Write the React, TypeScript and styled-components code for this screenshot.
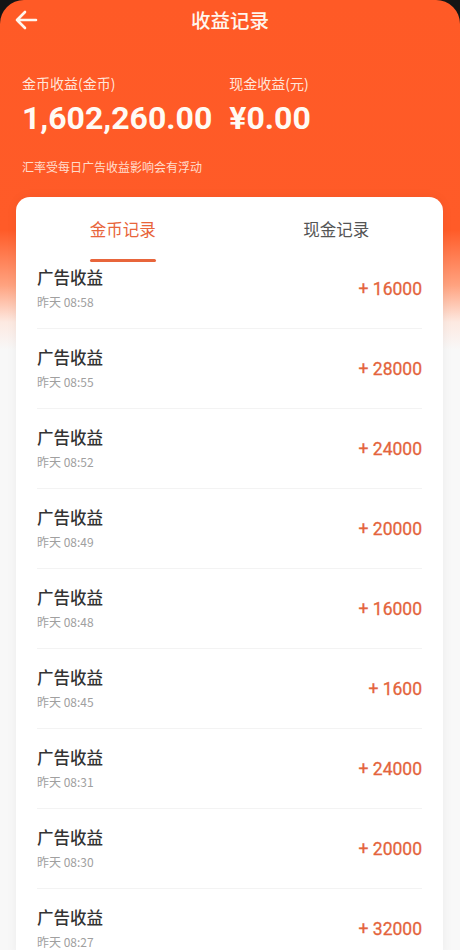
import React, { useState } from 'react';
import styled, { createGlobalStyle } from 'styled-components';

const GlobalStyle = createGlobalStyle`
    html, body {
        margin: 0;
        padding: 0;
        background: #151515;
    }
    * {
        box-sizing: border-box;
    }
`;

const Page = styled.div`
    width: 460px;
    height: 950px;
    overflow: hidden;
    border-radius: 24px 24px 0 0;
    font-family: 'Noto Sans CJK SC', 'Noto Sans', sans-serif;
    background: linear-gradient(
        180deg,
        #ff5a26 0px,
        #ff5b28 230px,
        #ffa27f 285px,
        #fde9e1 322px,
        #f8f8f8 350px,
        #f8f8f8 100%
    );
`;

const Header = styled.div`
    position: relative;
    height: 40px;
    display: flex;
    align-items: center;
    justify-content: center;
`;

const BackButton = styled.button`
    position: absolute;
    left: 12px;
    top: 8px;
    width: 28px;
    height: 24px;
    padding: 0;
    border: none;
    background: none;
    display: flex;
    align-items: center;
    justify-content: center;
    cursor: pointer;
`;

const HeaderTitle = styled.h1`
    margin: 0;
    font-size: 19.5px;
    line-height: 26px;
    font-weight: 500;
    color: #fff6ee;
`;

const Summary = styled.div`
    padding: 33px 22px 0;
    color: #fff;
`;

const SummaryRow = styled.div`
    display: flex;
    gap: 17px;
`;

const SummaryItem = styled.div`
    display: flex;
    flex-direction: column;
    gap: 7px;
`;

const SummaryLabel = styled.div`
    font-size: 14px;
    line-height: 20px;
    color: rgba(255, 245, 236, 0.92);
`;

const SummaryValue = styled.div`
    font-family: Roboto, 'Noto Sans', sans-serif;
    font-size: 32px;
    line-height: 36px;
    font-weight: 700;
    color: #fffaf4;
`;

const Note = styled.div`
    margin-top: 23px;
    font-size: 12px;
    line-height: 16px;
    color: rgba(255, 238, 226, 0.9);
`;

const Card = styled.div`
    margin: 22px 17px 0 16px;
    background: #fff;
    border-radius: 14px 14px 0 0;
    box-shadow: 0 0 12px rgba(0, 0, 0, 0.05);
    height: 760px;
`;

const Tabs = styled.div`
    display: flex;
    padding-top: 21px;
`;

const Tab = styled.button<{ $active: boolean }>`
    flex: 1;
    border: none;
    background: none;
    padding: 0;
    display: flex;
    flex-direction: column;
    align-items: center;
    gap: 19px;
    font-family: inherit;
    font-size: 16.5px;
    line-height: 22px;
    color: ${(p) => (p.$active ? '#e8653b' : '#555')};
    cursor: pointer;

    &::after {
        content: '';
        width: 66px;
        height: 3px;
        border-radius: 2px;
        background: ${(p) => (p.$active ? '#e8653b' : 'transparent')};
    }
`;

const List = styled.div`
    display: flex;
    flex-direction: column;
`;

const Row = styled.div<{ $first?: boolean }>`
    margin: 0 21px;
    padding: ${(p) => (p.$first ? '5px' : '18px')} 0 18px;
    border-bottom: 1px solid #f3f3f3;
    display: flex;
    align-items: center;
    justify-content: space-between;
`;

const RowText = styled.div`
    display: flex;
    flex-direction: column;
    gap: 7px;
`;

const RowTitle = styled.div`
    font-size: 16.5px;
    line-height: 20px;
    font-weight: 500;
    color: #333;
`;

const RowTime = styled.div`
    font-size: 12px;
    line-height: 16px;
    color: #a0a0a0;
`;

const Amount = styled.div`
    font-family: Roboto, 'Noto Sans', sans-serif;
    font-size: 17.5px;
    font-weight: 400;
    color: #e4643c;
    -webkit-text-stroke: 0.3px #e4643c;
`;

const records = [
    { time: '08:58', amount: 16000 },
    { time: '08:55', amount: 28000 },
    { time: '08:52', amount: 24000 },
    { time: '08:49', amount: 20000 },
    { time: '08:48', amount: 16000 },
    { time: '08:45', amount: 1600 },
    { time: '08:31', amount: 24000 },
    { time: '08:30', amount: 20000 },
    { time: '08:27', amount: 32000 },
];

const App = () => {
    const [tab, setTab] = useState(0);

    return (
        <>
            <GlobalStyle />
            <Page>
                <Header>
                    <BackButton aria-label="返回">
                        <svg width="24" height="20" viewBox="0 0 24 20" fill="none">
                            <path
                                d="M22 10H3M11 2L3 10L11 18"
                                stroke="#fff6ee"
                                strokeWidth="2.6"
                                strokeLinecap="round"
                                strokeLinejoin="round"
                            />
                        </svg>
                    </BackButton>
                    <HeaderTitle>收益记录</HeaderTitle>
                </Header>
                <Summary>
                    <SummaryRow>
                        <SummaryItem>
                            <SummaryLabel>金币收益(金币)</SummaryLabel>
                            <SummaryValue>1,602,260.00</SummaryValue>
                        </SummaryItem>
                        <SummaryItem>
                            <SummaryLabel>现金收益(元)</SummaryLabel>
                            <SummaryValue>¥0.00</SummaryValue>
                        </SummaryItem>
                    </SummaryRow>
                    <Note>汇率受每日广告收益影响会有浮动</Note>
                </Summary>
                <Card>
                    <Tabs>
                        <Tab $active={tab === 0} onClick={() => setTab(0)}>
                            金币记录
                        </Tab>
                        <Tab $active={tab === 1} onClick={() => setTab(1)}>
                            现金记录
                        </Tab>
                    </Tabs>
                    <List>
                        {records.map((r, i) => (
                            <Row $first={i === 0} key={i}>
                                <RowText>
                                    <RowTitle>广告收益</RowTitle>
                                    <RowTime>昨天 {r.time}</RowTime>
                                </RowText>
                                <Amount>+ {r.amount}</Amount>
                            </Row>
                        ))}
                    </List>
                </Card>
            </Page>
        </>
    );
};

export default App;
